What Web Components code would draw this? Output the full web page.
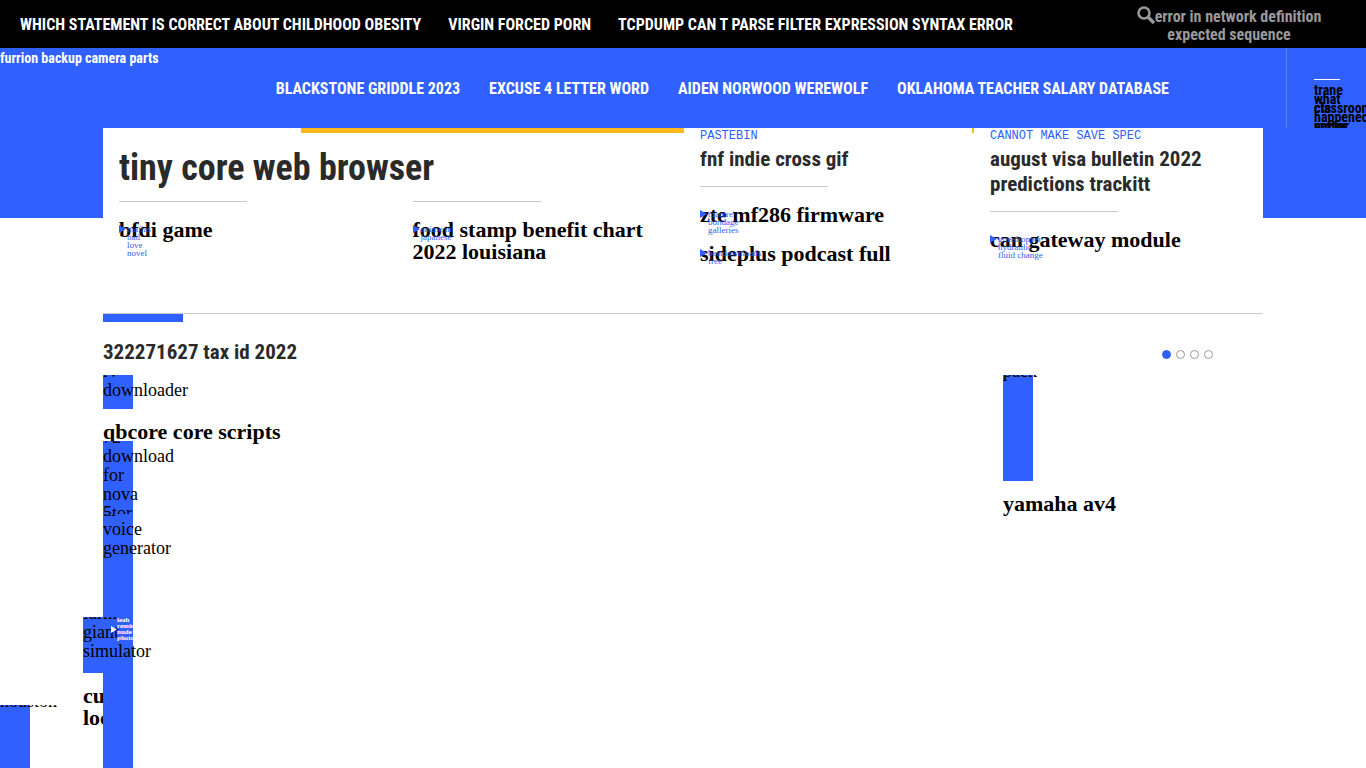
<!DOCTYPE html>
<html lang="en">
<head>
<meta charset="utf-8">
<title>tiny core web browser</title>
<style>
body{margin:0;background:#fff;color:#000;font-family:"Liberation Serif",serif;overflow-x:hidden;
--blue:#3061ff;--yellow:#ffb81c;--ink:#2a2a2a;--sans:"Roboto Condensed",Roboto,"Liberation Sans",sans-serif}
</style>
</head>
<body>
<site-page></site-page>
<script>
const define=(name,html)=>{
  const t=document.createElement('template');
  t.innerHTML=`<style>*{box-sizing:border-box}a{color:inherit;text-decoration:none}h1,h2,h3,p{margin:0}</style>${html}`;
  customElements.define(name,class extends HTMLElement{
    connectedCallback(){
      if(!this.shadowRoot)this.attachShadow({mode:'open'}).append(t.content.cloneNode(true));
    }
  });
};

define('top-bar',`<style>
:host{box-sizing:border-box;display:flex;align-items:center;justify-content:space-between;height:48px;padding:2px 30px 0 20px;background:#000;color:#fff;font:bold 16px/18px var(--sans)}
nav{display:flex;gap:27px;text-transform:uppercase;white-space:nowrap}
button{width:214px;padding:0;border:0;background:none;color:#999;font:inherit;text-align:center}
svg{width:18px;height:18px;vertical-align:-2px}
</style>
<nav aria-label="Top"><a href="#">which statement is correct about childhood obesity</a><a href="#">virgin forced porn</a><a href="#">tcpdump can t parse filter expression syntax error</a></nav>
<button type="button"><svg viewBox="0 0 18 18" fill="none" stroke="#999" aria-hidden="true"><circle cx="7" cy="7" r="5.5" stroke-width="2.6"/><path d="M11 11l6 6" stroke-width="3.4"/></svg>error in network definition expected sequence</button>`);

define('main-header',`<style>
:host{display:flex;height:80px;background:var(--blue);color:#fff;font:bold 16px/20px var(--sans);position:relative;z-index:2;overflow:hidden}
.logo{font-size:14px;line-height:21px;white-space:nowrap}
nav{flex:1;display:flex;justify-content:center;align-items:center;gap:29px;padding-top:2px;text-transform:uppercase;white-space:nowrap}
.menu{width:80px;border:0;border-left:1px solid #5c83ff;background:none;padding:31px 0 0 27px;display:block;text-align:left;color:#000;font:bold 14px/9px var(--sans)}
.menu i{display:block;width:26px;height:1px;background:#fff}
.words{display:grid;margin-top:6px;height:42px}
.words span{grid-area:1/1;white-space:nowrap}
</style>
<a class="logo" href="#">furrion backup camera parts</a>
<nav aria-label="Main"><a href="#">blackstone griddle 2023</a><a href="#">excuse 4 letter word</a><a href="#">aiden norwood werewolf</a><a href="#">oklahoma teacher salary database</a></nav>
<button class="menu" type="button"><i></i><div class="words"><span>trane<br>what<br>classroom<br>happened<br>sector</span><span><br><br>cts<br><br>motor</span></div></button>`);

define('story-link',`<style>
:host{display:block;position:relative}
h3{font:bold 22px/22px "Liberation Serif",serif}
.tag{position:absolute;left:0;top:6px;display:flex;gap:1px;color:var(--blue);font-size:9px;line-height:8px;white-space:nowrap}
svg{width:7px;height:8px;flex:none}
</style>
<h3><a href="#"><slot></slot></a></h3>
<div class="tag"><svg viewBox="0 0 7 8" fill="currentColor" aria-hidden="true"><path d="M0 0l7 4-7 4z"/></svg><slot name="tag"></slot></div>`);

define('feature-panel',`<style>
:host{display:block;background:linear-gradient(var(--blue),var(--blue)) 0 0/100% 90px no-repeat}
.card{max-width:1160px;margin:0 auto;background:#fff;display:grid;grid-template-columns:581fr 290fr 289fr;padding-bottom:48px}
.card>div{padding-left:16px}
.lead{padding-top:20px;background:linear-gradient(var(--yellow),var(--yellow)) 100% 0/66% 5px no-repeat}
.mid{background:linear-gradient(var(--yellow),var(--yellow)) 100% 0/2px 5px no-repeat}
h1{font:bold 36px/40px var(--sans);color:var(--ink);margin-bottom:-1px}
h2{font:bold 21px/25px var(--sans);color:var(--ink)}
.kicker{font:12px/16px "Liberation Mono",monospace;color:var(--blue);text-transform:uppercase;margin-bottom:3px}
.pair{display:grid;grid-template-columns:1fr 1fr;column-gap:22px}
.rule{border:0;margin:14px 0 17px;height:1px;width:128px;background:#c8c8c8}
story-link+story-link{margin-top:17px}
</style>
<section class="card">
<div class="lead"><h1>tiny core web browser</h1>
<div class="pair"><div><hr class="rule"><story-link>bfdi game<span slot="tag">mafias<br>bad<br>love<br>novel</span></story-link></div>
<div><hr class="rule"><story-link>food stamp benefit chart 2022 louisiana<span slot="tag">anime in<br>japanese</span></story-link></div></div></div>
<div class="mid"><p class="kicker">pastebin</p><h2>fnf indie cross gif</h2><hr class="rule">
<story-link>zte mf286 firmware<span slot="tag">mature<br>bondage<br>galleries</span></story-link>
<story-link>sideplus podcast full<span slot="tag">bestdownloads<br>free</span></story-link></div>
<div><p class="kicker">cannot make save spec</p><h2>august visa bulletin 2022<br>predictions trackitt</h2><hr class="rule">
<story-link>can gateway module<span slot="tag">grasshopper<br>hydraulic<br>fluid change</span></story-link></div>
</section>`);

define('slide-tile',`<style>
:host{display:flow-root;width:30px;background:var(--blue);clip-path:inset(0 -200px 0 0);font-size:18px;line-height:19px}
a{display:block;margin-top:-13px;white-space:nowrap}
</style><a href="#"><slot></slot></a>`);

define('story-carousel',`<style>
:host{display:flex;flex-direction:column;flex:1;width:100%;max-width:1160px;margin:0 auto;border-top:1px solid #ccc}
.bar{width:80px;height:8px;background:var(--blue)}
header{display:flex;align-items:center;justify-content:space-between;padding:18px 50px 10px 0}
h2{font:bold 21px/25px var(--sans);color:var(--ink)}
.dots{display:flex;gap:5px;padding-top:4px}
.dots button{width:9px;height:9px;padding:0;border:1px solid #999;border-radius:50%;background:#fff}
.dots button.on{background:var(--blue);border-color:var(--blue)}
.track{flex:1;display:grid;grid-template-columns:900px 1fr;position:relative}
.column{display:flex;flex-direction:column}
h3{font:bold 22px/22px "Liberation Serif",serif;margin-top:12px}
.short{height:34px}.medium{height:73px}.tall{height:106px}.fill{flex:1;min-height:200px}
.first h3{margin-bottom:-2px}
.stray{position:absolute;left:-20px;top:242px}
.stray slide-tile{height:56px}
.stray h3{width:20px;overflow:hidden;white-space:nowrap}
.play{position:absolute;left:28px;top:0;width:22px;overflow:hidden;display:flex;align-items:center;color:#fff;font-size:7px;line-height:6px;font-weight:bold}
.play svg{width:6px;height:7px;flex:none}
.edge{position:absolute;left:-103px;top:330px;bottom:0}
</style>
<div class="bar"></div>
<header><h2>322271627 tax id 2022</h2><div class="dots"><button class="on" type="button" aria-label="Slide 1"></button><button type="button" aria-label="Slide 2"></button><button type="button" aria-label="Slide 3"></button><button type="button" aria-label="Slide 4"></button></div></header>
<div class="track">
<div class="column first"><slide-tile class="short">rv<br>downloader</slide-tile><h3><a href="#">qbcore core scripts</a></h3>
<slide-tile class="medium">72<br>download<br>for<br>nova<br>5tor</slide-tile><slide-tile class="fill">ai<br>voice<br>generator</slide-tile></div>
<div class="column"><slide-tile class="tall">pack</slide-tile><h3><a href="#">yamaha av4</a></h3></div>
<div class="stray"><slide-tile>farm<br>giant<br>simulator</slide-tile><h3>cu<br>loc</h3>
<div class="play"><svg viewBox="0 0 6 7" fill="currentColor" aria-hidden="true"><path d="M0 0l6 3.5L0 7z"/></svg><span>leah<br>remini<br>nude<br>photos</span></div></div>
<slide-tile class="edge">houston</slide-tile>
</div>`);

define('site-page',`<style>
:host{display:flex;flex-direction:column;min-height:100vh}
</style><top-bar></top-bar><main-header></main-header><feature-panel></feature-panel><story-carousel></story-carousel>`);
</script>
</body>
</html>
